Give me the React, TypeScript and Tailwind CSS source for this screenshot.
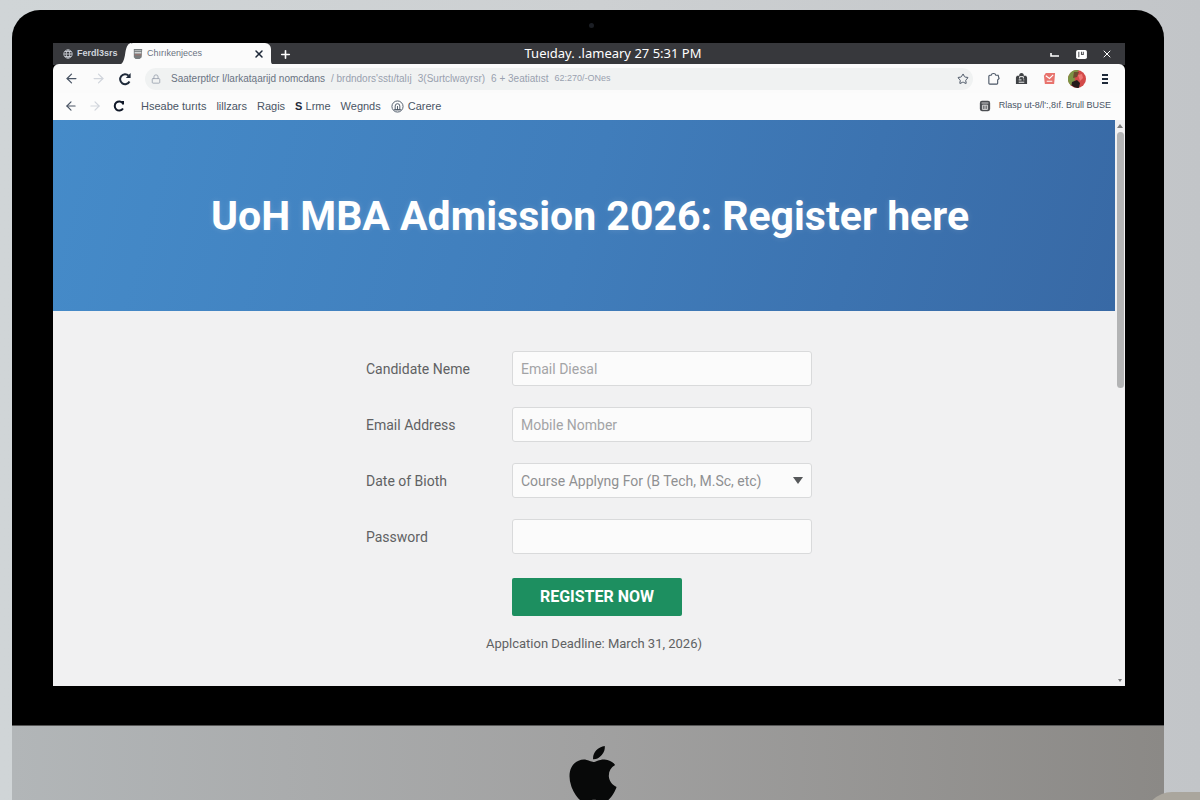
import type { ReactNode } from "react";
import { ArrowLeft, ArrowRight, Lock, Plus, Star, X } from "lucide-react";
import { FaApple } from "react-icons/fa";

const addressParts = [
  { text: "/ brdndors'sstı/talıj", className: "text-gray-400" },
  { text: "3(Surtclwayrsr)", className: "text-gray-400" },
  { text: "6 + 3eatiatıst", className: "text-gray-400" },
  { text: "62:270/-ONes", className: "text-gray-400 text-[9px]" },
];

function Reload({ className }: { className: string }) {
  return (
    <svg viewBox="0 0 14 14" className={className} fill="none" stroke="currentColor" strokeWidth="2">
      <path d="M11.5 9.6A5 5 0 1 1 10.6 3.6" />
      <path d="M12.6 1v5H7.8z" fill="currentColor" stroke="none" />
    </svg>
  );
}

function IconButton({ label, children }: { label: string; children: ReactNode }) {
  return (
    <button type="button" aria-label={label} className="flex w-4 shrink-0 items-center justify-center">
      {children}
    </button>
  );
}

function TabStrip() {
  return (
    <div className="grid h-[22px] grid-cols-[1fr_auto_1fr] items-center bg-[#37383c] text-white">
      <div className="flex h-full items-center text-[9px]">
        <button type="button" className="flex h-full w-[74px] items-center gap-1 pl-[10px] font-bold text-gray-300">
          <svg viewBox="0 0 12 12" className="size-[10px] shrink-0" fill="none" stroke="currentColor">
            <circle cx="6" cy="6" r="5" />
            <ellipse cx="6" cy="6" rx="2.2" ry="5" />
            <path d="M1 6h10M2 3h8M2 9h8" />
          </svg>
          <span className="whitespace-nowrap">Ferdl3srs</span>
        </button>
        <div className="relative flex h-full w-[144px] items-center rounded-t-md bg-[#fbfbfb] pl-[6px] text-gray-500">
          <svg viewBox="0 0 12 22" className="absolute bottom-0 -left-2 h-[22px] w-3 text-[#fbfbfb]" fill="currentColor">
            <path d="M0 22C4 21 5 17 6 12 7 5 8 1 12 0v22z" />
          </svg>
          <svg viewBox="0 0 6 6" className="absolute -right-1 bottom-0 size-1 text-[#fbfbfb]" fill="currentColor">
            <path d="M0 0c0 4 2 6 6 6H0z" />
          </svg>
          <svg viewBox="0 0 12 14" className="relative mr-1 h-3 w-[10px]">
            <path d="M1 1h10l-.6 10L8 13H3l-2-2z" fill="#777c7e" />
            <path d="M2 3h8" stroke="#c9cccc" />
            <path d="M2 5.6h8" stroke="#fff" strokeWidth="1.2" />
            <path d="M2 8h8" stroke="#a86d66" />
          </svg>
          <span className="flex-1">Chırıkenjeces</span>
          <button type="button" aria-label="Close tab" className="mr-[6px] text-gray-800">
            <X className="size-3" strokeWidth={3} />
          </button>
        </div>
        <button type="button" aria-label="New tab" className="ml-2">
          <Plus className="size-[13px]" strokeWidth={3} />
        </button>
      </div>
      <p className="pl-12 font-['Noto_Sans'] text-[13px] whitespace-nowrap">Tueıday. .lameary 27 5:31 PM</p>
      <div className="flex items-center justify-end gap-[10px] pr-[10px]">
        <IconButton label="Minimize">
          <svg viewBox="0 0 10 10" className="size-[10px]">
            <path d="M1 4v3h8" fill="none" stroke="#fff" strokeWidth="1.6" />
          </svg>
        </IconButton>
        <IconButton label="Restore">
          <svg viewBox="0 0 12 10" className="h-[9px] w-[11px]">
            <rect width="12" height="10" rx="2" fill="#fff" />
            <path d="M3 2v6M6 2v3h2V2" fill="none" stroke="#55565a" strokeWidth="1.2" />
          </svg>
        </IconButton>
        <IconButton label="Close window">
          <X className="size-3" strokeWidth={2} />
        </IconButton>
      </div>
    </div>
  );
}

function Toolbar() {
  return (
    <div className="-mt-px flex h-[29px] items-center gap-3 rounded-t-md bg-[#fbfbfb] pr-3 pl-[10px] text-gray-600">
      <div className="flex items-center gap-[11px]">
        <IconButton label="Back">
          <ArrowLeft className="size-[15px]" />
        </IconButton>
        <IconButton label="Forward">
          <ArrowRight className="size-[15px] text-gray-300" />
        </IconButton>
        <IconButton label="Reload">
          <Reload className="size-[14px] text-gray-800" />
        </IconButton>
      </div>
      <div className="flex h-[22px] min-w-0 flex-1 items-center gap-[6px] rounded-full bg-[#f0f2f2] pr-1 pl-[6px] text-[10px] whitespace-nowrap">
        <Lock className="mr-1 size-[10px] text-gray-400" />
        <span className="text-gray-500">Saaterptlcr l/larkatąarijd nomcdans</span>
        {addressParts.map((part) => (
          <span key={part.text} className={part.className}>{part.text}</span>
        ))}
        <button type="button" aria-label="Bookmark this page" className="ml-auto">
          <Star className="size-3" />
        </button>
      </div>
      <IconButton label="Extensions">
        <svg viewBox="0 0 14 14" className="size-[13px]" fill="none" stroke="currentColor" strokeWidth="1.2">
          <path d="M3 3.500h1.500C5 1 9 1 9.500 3.500H12L13 7l-1.500 1.500v3.500a1 1 0 0 1-1 1H3a1 1 0 0 1-1-1v-7.500a1 1 0 0 1 1-1z" />
        </svg>
      </IconButton>
      <IconButton label="Save">
        <svg viewBox="0 0 14 14" className="size-[13px]">
          <path d="M2 4h2.500a2.500 3 0 0 1 5 0H12l1 2v7H1V6z" fill="#3f4245" />
          <path d="M5 7V5h4v2M4 8.500h3M9 8.500h1M4 11h6" fill="none" stroke="#fff" strokeWidth="1" />
        </svg>
      </IconButton>
      <IconButton label="Mail">
        <svg viewBox="0 0 14 14" className="size-[13px]">
          <path d="M3 1h10l-1 12H2L1 4z" fill="#e8736d" />
          <path d="M3 4l4 3 4-4M4 10h6" fill="none" stroke="#fff" strokeWidth="1.2" />
        </svg>
      </IconButton>
      <IconButton label="Profile">
        <svg viewBox="0 0 18 18" className="size-[18px] shrink-0">
          <circle cx="9" cy="9" r="9" fill="#d34a49" />
          <path d="M9 0a9 9 0 0 0-6 15.700L7 10 6 5l5-4.800z" fill="#7c9445" />
          <path d="M6 2l5 0-2 5-4 1z" fill="#6e4c30" />
          <path d="M4 12l5-2 3 3-1 4.800a9 9 0 0 1-7.500-2.500z" fill="#251a1a" />
          <path d="M10 5l4-1 1 4-3 3z" fill="#ee7774" />
        </svg>
      </IconButton>
      <IconButton label="Menu">
        <svg viewBox="0 0 8 12" className="h-3 w-2 text-gray-800" stroke="currentColor" strokeWidth="2">
          <path d="M1 2h6M1 6h6M1 10h6" />
        </svg>
      </IconButton>
    </div>
  );
}

function BookmarksBar() {
  return (
    <div className="flex h-[27px] items-center justify-between bg-[#fcfcfc] pr-[14px] pb-px pl-[10px] text-[11px] whitespace-nowrap text-gray-600">
      <div className="flex items-center gap-[10px]">
        <div className="flex items-center gap-2">
          <IconButton label="Previous">
            <ArrowLeft className="size-[14px]" />
          </IconButton>
          <IconButton label="Next">
            <ArrowRight className="size-[14px] text-gray-300" />
          </IconButton>
          <IconButton label="Refresh">
            <svg viewBox="0 0 12 12" className="size-3 text-gray-900" fill="none" stroke="currentColor" strokeWidth="2">
              <path d="M10 8.500A4.500 4.500 0 1 1 10 3.500M10 1v3.500" />
            </svg>
          </IconButton>
        </div>
        <a href="#" className="ml-1">Hseabe turıts</a>
        <a href="#">lillzars</a>
        <a href="#">Ragis</a>
        <a href="#"><b className="text-gray-800">S</b> Lrme</a>
        <a href="#">Wegnds</a>
        <a href="#" className="flex items-center gap-1">
          <svg viewBox="0 0 14 14" className="size-[13px]" fill="none" stroke="currentColor">
            <circle cx="7" cy="7" r="6" />
            <path d="M4.500 10.500V6.500a2.500 2.500 0 0 1 5 0v4zM7 10.500V6.500M3 10.500h8" />
          </svg>
          Carere
        </a>
      </div>
      <a href="#" className="flex items-center gap-2 text-[9px]">
        <svg viewBox="0 0 14 14" className="size-3">
          <rect x="1" y="1" width="12" height="12" rx="2.500" fill="#4b4e52" />
          <path d="M3 3.500h8M4 6v5h6V6zM6 6v5M8 6v5" fill="none" stroke="#e5e5e5" />
        </svg>
        <span>Rlasp ut-8/l':,8ıf. Brull BUSE</span>
      </a>
    </div>
  );
}

const labelStyle = "text-sm text-[#606163]";
const fieldStyle =
  "h-[35px] w-full rounded-[3px] border border-[#d9dadb] bg-[#fbfbfb] px-2 text-sm text-[#8f9092] placeholder:text-[#a3a4a6] outline-none";

function RegisterForm() {
  return (
    <form className="mx-auto max-w-[446px] font-[Roboto,sans-serif]" onSubmit={(e) => e.preventDefault()}>
      <div className="grid grid-cols-[146px_1fr] items-center gap-y-[21px]">
        <label htmlFor="name" className={labelStyle}>Candidate Neme</label>
        <input id="name" type="text" placeholder="Email Diesal" className={fieldStyle} />
        <label htmlFor="email" className={labelStyle}>Email Address</label>
        <input id="email" type="text" placeholder="Mobile Nomber" className={fieldStyle} />
        <label htmlFor="birth" className={labelStyle}>Date of Bioth</label>
        <div className="relative">
          <select id="birth" className={`${fieldStyle} appearance-none`}>
            <option>Course Applyng For (B Tech, M.Sc, etc)</option>
          </select>
          <svg viewBox="0 0 10 7" className="pointer-events-none absolute top-[14px] right-[9px] h-[7px] w-[10px]">
            <path d="M0 0h10L5 7z" fill="#56585a" />
          </svg>
        </div>
        <label htmlFor="password" className={labelStyle}>Password</label>
        <input id="password" type="password" className={fieldStyle} />
      </div>
      <button
        type="submit"
        className="mt-6 ml-[146px] h-[38px] w-[170px] rounded-[2px] bg-[#1d8f60] text-base font-bold text-white"
      >
        REGISTER NOW
      </button>
      <p className="mt-[18px] ml-30 text-[13px] leading-5 text-[#606163]">Applcation Deadline: March 31, 2026)</p>
    </form>
  );
}

function Scrollbar() {
  return (
    <div className="flex w-[10px] shrink-0 flex-col items-center bg-[#f1f1f2] pt-1">
      <svg viewBox="0 0 6 4" className="h-1 w-[6px]">
        <path d="M0 4h6L3 0z" fill="#7c7c7d" />
      </svg>
      <div className="mt-1 h-[256px] w-[7px] rounded-sm bg-[#b3b4b5]" />
      <svg viewBox="0 0 4 3" className="mt-auto mb-1 h-[3px] w-1">
        <path d="M0 0h4L2 3z" fill="#7c7c7d" />
      </svg>
    </div>
  );
}

export default function App() {
  return (
    <div className="relative flex h-screen flex-col overflow-hidden bg-linear-to-r from-[#d0d5d7] via-[#cdd0d2] to-[#c2c5c8] pt-[10px] pr-9 pl-3 font-['Liberation_Sans',sans-serif]">
      <main className="rounded-t-[28px] border-b border-[#555] bg-black pt-[33px] pr-[39px] pb-[39px] pl-[41px]">
        <div className="relative">
          <span className="absolute -top-5 left-1/2 size-[5px] rounded-full bg-[#1b1e24]" />
          <TabStrip />
          <Toolbar />
          <BookmarksBar />
          <div className="flex">
            <div className="min-w-0 flex-1 bg-[#f1f1f2]">
              <header className="flex h-[191px] items-center justify-center bg-linear-105 from-[#458bc9] via-[#407dbb] to-[#3869a5] pt-[2px] pl-3">
                <h1 className="font-[Roboto,sans-serif] text-[41px] font-bold text-white [text-shadow:0_0_6px_rgba(255,255,255,0.15)]">
                  UoH MBA Admission 2026: Register here
                </h1>
              </header>
              <div className="pt-10 pb-8 pl-[10px]">
                <RegisterForm />
              </div>
            </div>
            <Scrollbar />
          </div>
        </div>
      </main>
      <footer className="flex flex-1 justify-center bg-linear-to-r from-[#b2b6b8] via-[#a1a1a1] to-[#8b8986] pt-4 pl-[10px]">
        <FaApple className="h-16 w-12 shrink-0 text-[#080909]" />
      </footer>
      <div className="absolute right-0 -bottom-8 h-10 w-14 rounded-tl-[28px] bg-[#aaa69d]" />
    </div>
  );
}
